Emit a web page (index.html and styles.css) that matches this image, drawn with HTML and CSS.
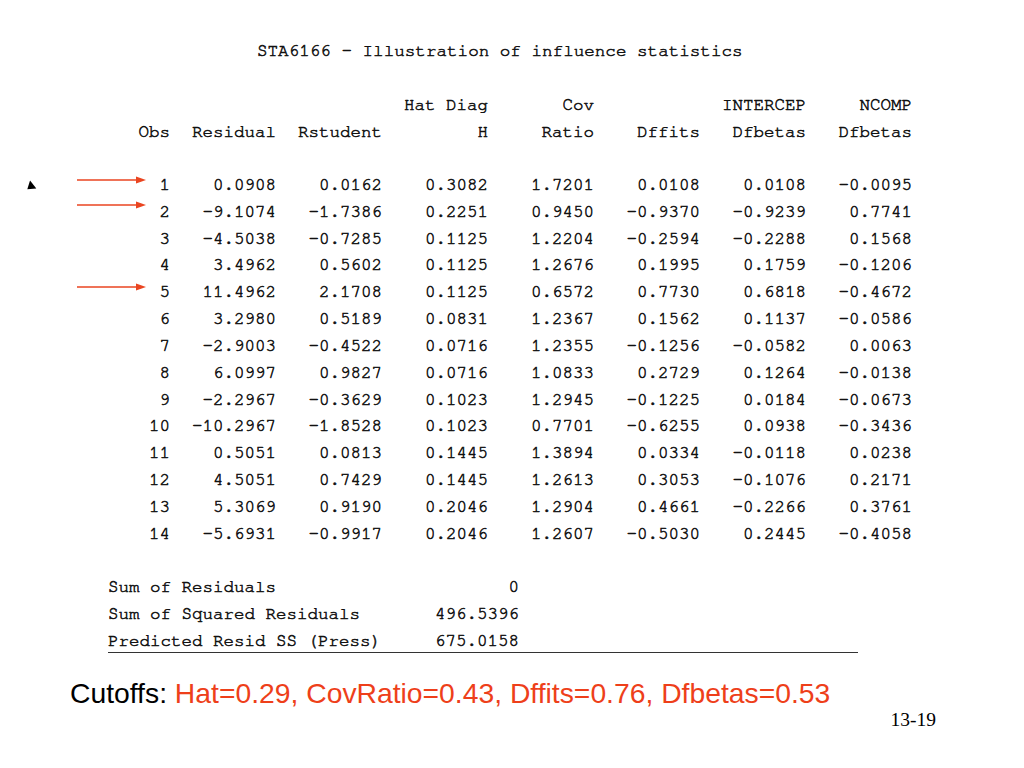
FILE: index.html
```html
<!DOCTYPE html>
<html>
<head>
<meta charset="utf-8">
<link rel="stylesheet" href="styles.css">
</head>
<body>
<div class="slide">
  <h1 class="title">STA6166 - Illustration of influence statistics</h1>

  <div class="table">
    <div class="row head">
      <span></span><span></span><span></span><span>Hat Diag</span><span>Cov</span><span></span><span>INTERCEP</span><span>NCOMP</span>
    </div>
    <div class="row head">
      <span>Obs</span><span>Residual</span><span>Rstudent</span><span>H</span><span>Ratio</span><span>Dffits</span><span>Dfbetas</span><span>Dfbetas</span>
    </div>
    <div class="spacer"></div>
    <div class="row">
      <svg class="mark" width="10" height="10" viewBox="0 0 10 10"><polygon points="0.5,8.5 5,0.5 9.5,9.5" fill="#000"/></svg>
      <svg class="arrow" width="70" height="10" viewBox="0 0 70 10"><line x1="0" y1="5" x2="62" y2="5" stroke="#ea4520" stroke-width="1.6"/><polygon points="59,1.5 69,5 59,8.5" fill="#ea4520"/></svg>
      <span>1</span><span>0.0908</span><span>0.0162</span><span>0.3082</span><span>1.7201</span><span>0.0108</span><span>0.0108</span><span>-0.0095</span>
    </div>
    <div class="row">
      <svg class="arrow a2" width="70" height="10" viewBox="0 0 70 10"><line x1="0" y1="5" x2="62" y2="5" stroke="#ea4520" stroke-width="1.6"/><polygon points="59,1.5 69,5 59,8.5" fill="#ea4520"/></svg>
      <span>2</span><span>-9.1074</span><span>-1.7386</span><span>0.2251</span><span>0.9450</span><span>-0.9370</span><span>-0.9239</span><span>0.7741</span>
    </div>
    <div class="row"><span>3</span><span>-4.5038</span><span>-0.7285</span><span>0.1125</span><span>1.2204</span><span>-0.2594</span><span>-0.2288</span><span>0.1568</span></div>
    <div class="row"><span>4</span><span>3.4962</span><span>0.5602</span><span>0.1125</span><span>1.2676</span><span>0.1995</span><span>0.1759</span><span>-0.1206</span></div>
    <div class="row">
      <svg class="arrow" width="70" height="10" viewBox="0 0 70 10"><line x1="0" y1="5" x2="62" y2="5" stroke="#ea4520" stroke-width="1.6"/><polygon points="59,1.5 69,5 59,8.5" fill="#ea4520"/></svg>
      <span>5</span><span>11.4962</span><span>2.1708</span><span>0.1125</span><span>0.6572</span><span>0.7730</span><span>0.6818</span><span>-0.4672</span>
    </div>
    <div class="row"><span>6</span><span>3.2980</span><span>0.5189</span><span>0.0831</span><span>1.2367</span><span>0.1562</span><span>0.1137</span><span>-0.0586</span></div>
    <div class="row"><span>7</span><span>-2.9003</span><span>-0.4522</span><span>0.0716</span><span>1.2355</span><span>-0.1256</span><span>-0.0582</span><span>0.0063</span></div>
    <div class="row"><span>8</span><span>6.0997</span><span>0.9827</span><span>0.0716</span><span>1.0833</span><span>0.2729</span><span>0.1264</span><span>-0.0138</span></div>
    <div class="row"><span>9</span><span>-2.2967</span><span>-0.3629</span><span>0.1023</span><span>1.2945</span><span>-0.1225</span><span>0.0184</span><span>-0.0673</span></div>
    <div class="row"><span>10</span><span>-10.2967</span><span>-1.8528</span><span>0.1023</span><span>0.7701</span><span>-0.6255</span><span>0.0938</span><span>-0.3436</span></div>
    <div class="row"><span>11</span><span>0.5051</span><span>0.0813</span><span>0.1445</span><span>1.3894</span><span>0.0334</span><span>-0.0118</span><span>0.0238</span></div>
    <div class="row"><span>12</span><span>4.5051</span><span>0.7429</span><span>0.1445</span><span>1.2613</span><span>0.3053</span><span>-0.1076</span><span>0.2171</span></div>
    <div class="row"><span>13</span><span>5.3069</span><span>0.9190</span><span>0.2046</span><span>1.2904</span><span>0.4661</span><span>-0.2266</span><span>0.3761</span></div>
    <div class="row"><span>14</span><span>-5.6931</span><span>-0.9917</span><span>0.2046</span><span>1.2607</span><span>-0.5030</span><span>0.2445</span><span>-0.4058</span></div>
  </div>

  <div class="summary">
    <div class="srow"><span>Sum of Residuals</span><span class="val">0</span></div>
    <div class="srow"><span>Sum of Squared Residuals</span><span class="val">496.5396</span></div>
    <div class="srow last"><span>Predicted Resid SS (Press)</span><span class="val">675.0158</span></div>
  </div>

  <p class="cutoffs">Cutoffs: <span class="red">Hat=0.29, CovRatio=0.43, Dffits=0.76, Dfbetas=0.53</span></p>
  <div class="pagenum">13-19</div>
</div>
</body>
</html>
```

FILE: styles.css
```css
html, body {
  margin: 0;
  padding: 0;
  background: #fff;
}

.slide {
  width: 1024px;
  height: 768px;
  position: relative;
  overflow: hidden;
  font-family: "Nimbus Mono PS", "FreeMono", "Courier New", "Liberation Mono", "DejaVu Sans Mono", monospace;
  font-size: 17.5px;
  color: #111;
  -webkit-text-stroke: 0.55px #111;
}

.title {
  margin: 0;
  padding: 38px 0 0 257px;
  font-size: 17.6px;
  font-weight: normal;
  line-height: 27px;
}

.table {
  margin: 27px 0 0 108px;
  width: 804px;
}

.row {
  display: grid;
  grid-template-columns: 62px repeat(7, 106px);
  height: 26.85px;
  line-height: 26.85px;
  position: relative;
}

.row span {
  text-align: right;
  white-space: pre;
}

.spacer {
  height: 26.2px;
}

.arrow {
  position: absolute;
  left: -31px;
  top: 3px;
}

.arrow.a2 {
  top: 1px;
}

.mark {
  position: absolute;
  left: -82px;
  top: 8px;
  transform: rotate(-12deg);
}

.summary {
  margin: 26px 0 0 108px;
  width: 750px;
  border-bottom: 1.5px solid #333;
}

.srow {
  display: grid;
  grid-template-columns: 300px 111px;
  height: 27px;
  line-height: 27px;
}

.srow.last {
  height: 24px;
}

.srow .val {
  text-align: right;
}

.cutoffs {
  margin: 24px 0 0 70px;
  font-family: "Liberation Sans", Arial, sans-serif;
  font-size: 28.3px;
  line-height: 32px;
  color: #000;
  -webkit-text-stroke: 0;
}

.red {
  color: #ee3f1a;
}

.pagenum {
  position: absolute;
  right: 88px;
  top: 708px;
  font-family: "Liberation Serif", "Times New Roman", serif;
  font-size: 19.5px;
  line-height: 24px;
  color: #000;
  -webkit-text-stroke: 0;
}
```
